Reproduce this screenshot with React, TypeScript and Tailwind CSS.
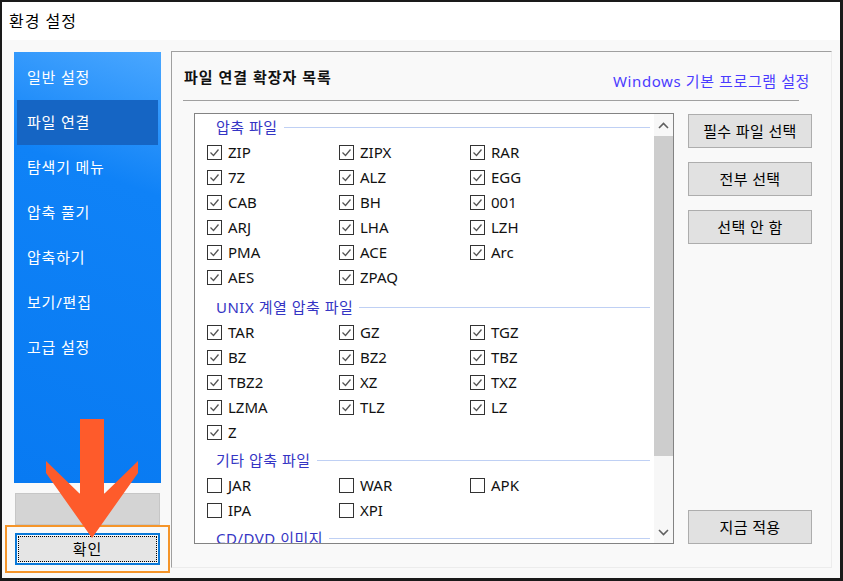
import React from "react";

const FONT = { fontFamily: '"Noto Sans", "Noto Sans CJK KR", sans-serif' };

const MENU = ["일반 설정", "파일 연결", "탐색기 메뉴", "압축 풀기", "압축하기", "보기/편집", "고급 설정"];

const GROUPS: { title: string; mt: string; checked: boolean; rows: string[][] }[] = [
  {
    title: "압축 파일",
    mt: "mt-0",
    checked: true,
    rows: [
      ["ZIP", "ZIPX", "RAR"],
      ["7Z", "ALZ", "EGG"],
      ["CAB", "BH", "001"],
      ["ARJ", "LHA", "LZH"],
      ["PMA", "ACE", "Arc"],
      ["AES", "ZPAQ"],
    ],
  },
  {
    title: "UNIX 계열 압축 파일",
    mt: "mt-[5px]",
    checked: true,
    rows: [
      ["TAR", "GZ", "TGZ"],
      ["BZ", "BZ2", "TBZ"],
      ["TBZ2", "XZ", "TXZ"],
      ["LZMA", "TLZ", "LZ"],
      ["Z"],
    ],
  },
  {
    title: "기타 압축 파일",
    mt: "mt-[3px]",
    checked: false,
    rows: [
      ["JAR", "WAR", "APK"],
      ["IPA", "XPI"],
    ],
  },
  {
    title: "CD/DVD 이미지",
    mt: "mt-[3px]",
    checked: false,
    rows: [],
  },
];

function Check({ on, label }: { on: boolean; label: string }) {
  return (
    <div className="flex items-center h-[25px]">
      <span className="w-[15px] h-[15px] border border-[#333] bg-white flex items-center justify-center shrink-0">
        {on && (
          <svg width="13" height="13" viewBox="0 0 13 13">
            <polyline points="2.5,6.5 5.5,9.5 10.5,3.5" fill="none" stroke="#555" strokeWidth="1.3" />
          </svg>
        )}
      </span>
      <span className="ml-[6px] text-[15px] text-[#111]">{label}</span>
    </div>
  );
}

function Btn({ label }: { label: string }) {
  return (
    <div className="h-[34px] w-[124px] bg-[#e1e1e1] border border-[#adadad] flex items-center justify-center text-[15px] text-black tracking-wide">
      {label}
    </div>
  );
}

export default function App() {
  return (
    <div className="relative w-[843px] h-[581px] bg-[#1a1a1a] pt-[2px] pl-[2px] pr-[3px] pb-[3px]" style={FONT}>
      <div className="w-full h-full flex flex-col bg-[#f9f9f9]">
        {/* title bar */}
        <div className="h-[38px] bg-white flex items-center pl-[7px] text-[16px] tracking-[1px] text-black">환경 설정</div>

        <div className="flex-1 flex pl-[12px]">
          {/* left nav */}
          <div className="w-[147px] pt-[12px] flex flex-col">
            <div className="h-[431px] pt-[3px] px-[3px] bg-[linear-gradient(200deg,#4aa7ff_0%,#0f82f7_30%,#087af2_100%)]">
              {MENU.map((m, i) => (
                <div
                  key={m}
                  className={
                    "h-[45px] flex items-center pl-[10px] text-[15px] tracking-[0.8px] text-white " +
                    (i === 1 ? "bg-[#1565c4]" : "")
                  }
                >
                  {m}
                </div>
              ))}
            </div>
            <div className="mt-[10px] ml-[1px] w-[145px] h-[32px] bg-[#d4d4d4] border border-[#c6c6c6]" />
            <div className="mt-[8px] ml-[1px] w-[145px] h-[32px] border-2 border-[#0a78d7] p-[1px]">
              <div className="w-full h-full border border-dotted border-black bg-[#e5e5e5] flex items-center justify-center text-[15px] tracking-[1px] text-black">
                확인
              </div>
            </div>
          </div>

          {/* right panel */}
          <div className="ml-[10px] mt-[11px] w-[661px] h-[517px] border-t border-l border-[#a0a0a0] border-r border-b border-r-[#ececec] border-b-[#ececec] flex flex-col">
            <div className="h-[49px] mx-[11px] mr-[32px] border-b border-[#a0a0a0] flex justify-between">
              <div className="pt-[14px] pl-[1px] text-[15px] font-bold tracking-[1px] text-[#111]">파일 연결 확장자 목록</div>
              <div className="pt-[18px] -mr-[11px] text-[15px] tracking-[0.6px] text-[#4b3cff]">Windows 기본 프로그램 설정</div>
            </div>

            <div className="flex mt-[12px] ml-[22px]">
              {/* list */}
              <div className="w-[480px] h-[431px] border border-[#838383] bg-white flex overflow-hidden">
                <div className="flex-1 overflow-hidden pt-[1px]">
                  {GROUPS.map((g) => (
                    <div key={g.title} className={g.mt}>
                      <div className="h-[25px] flex items-center pl-[21px] pr-[4px]">
                        <span className="text-[15px] tracking-[0.5px] text-[#3535c4]">{g.title}</span>
                        <span className="flex-1 ml-[6px] h-px bg-[#bfd0f4]" />
                      </div>
                      {g.rows.map((r, ri) => (
                        <div key={ri} className="grid grid-cols-[132px_131px_131px] pl-[12px]">
                          {r.map((x) => (
                            <Check key={x} on={g.checked} label={x} />
                          ))}
                        </div>
                      ))}
                    </div>
                  ))}
                </div>
                {/* scrollbar */}
                <div className="w-[19px] bg-[#f7f7f7] flex flex-col">
                  <div className="h-[22px] flex items-center justify-center">
                    <svg width="11" height="7" viewBox="0 0 11 7">
                      <polyline points="1,6 5.5,1.5 10,6" fill="none" stroke="#606060" strokeWidth="1.6" />
                    </svg>
                  </div>
                  <div className="h-[320px] bg-[#cdcdcd]" />
                  <div className="flex-1" />
                  <div className="h-[22px] flex items-center justify-center">
                    <svg width="11" height="7" viewBox="0 0 11 7">
                      <polyline points="1,1 5.5,5.5 10,1" fill="none" stroke="#606060" strokeWidth="1.6" />
                    </svg>
                  </div>
                </div>
              </div>

              {/* buttons */}
              <div className="ml-[14px] h-[431px] flex flex-col">
                <div className="mt-[1px] flex flex-col gap-[14px]">
                  <Btn label="필수 파일 선택" />
                  <Btn label="전부 선택" />
                  <Btn label="선택 안 함" />
                </div>
                <div className="mt-auto">
                  <Btn label="지금 적용" />
                </div>
              </div>
            </div>
          </div>
        </div>
      </div>

      {/* annotation: orange box + arrow */}
      <div className="absolute left-[5px] top-[525px] w-[165px] h-[48px] border-2 border-[#f5952a]" />
      <svg className="absolute left-[44px] top-[417px]" width="96" height="124" viewBox="0 0 96 124">
        <polygon points="36,2 60,2 60,77 94,44 94,56 48,121 2,56 2,44 36,77" fill="#fe5b2b" />
      </svg>
    </div>
  );
}
